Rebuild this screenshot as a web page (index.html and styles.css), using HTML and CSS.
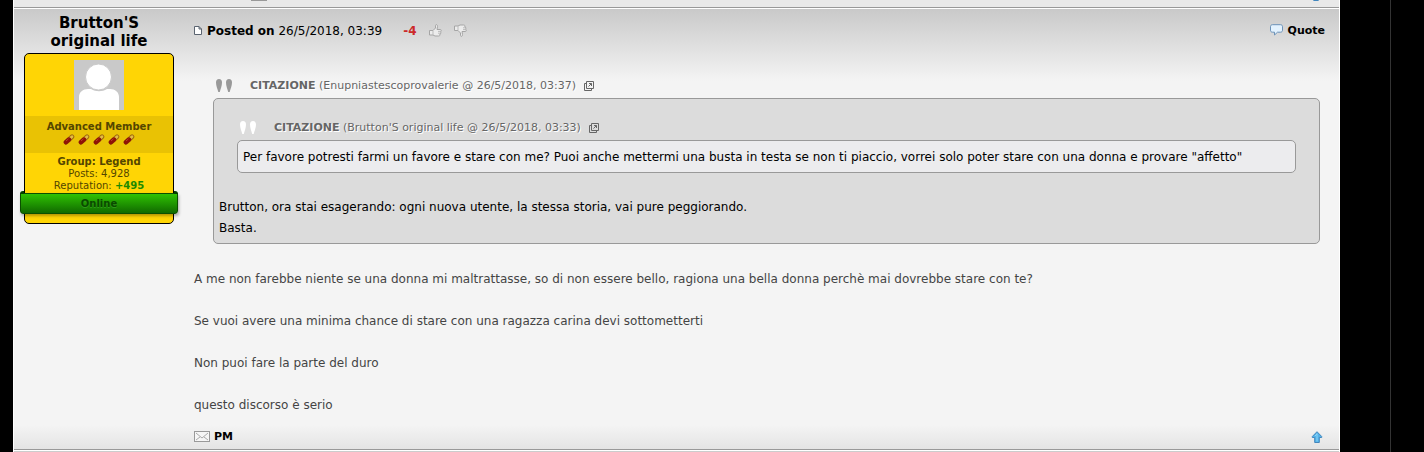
FILE: index.html
```html
<!DOCTYPE html>
<html lang="it">
<head>
    <meta charset="UTF-8">
    <meta name="viewport" content="width=device-width, initial-scale=1.0">
    <title>Forum</title>
    <link rel="stylesheet" href="styles.css">
</head>
<body>
    <svg class="defs" aria-hidden="true">
        <symbol id="mail" viewBox="0 0 16 11">
            <rect x=".5" y=".5" width="15" height="10" fill="#f6f6f6" stroke="#999"/>
            <path d="M2 2l6 5 6-5M2 9l4-3M14 9l-4-3" fill="none" stroke="#aaa"/>
        </symbol>
        <symbol id="arrow" viewBox="0 0 12 12">
            <path d="M6 .7L10.700 5.500V6.500H8.300V11.500H3.700V6.500H1.300V5.500Z" fill="#53b2e8" stroke="#4386bd"/>
            <path d="M6 2.500v8M4 5l2-2" stroke="#8dd4f7" fill="none"/>
        </symbol>
        <symbol id="quotes" viewBox="0 0 16 14">
            <path d="M3 0C5 0 6 1.300 6 3.500C6 7 4.500 10 3.800 13H2.300C1.600 10 0 7 0 3.500C0 1.300 1 0 3 0ZM13 0c2 0 3 1.300 3 3.500c0 3.500-1.600 6.500-2.300 9.500h-1.500c-.7-3-2.200-6-2.200-9.500C10 1.300 11 0 13 0Z" fill="currentColor"/>
        </symbol>
        <symbol id="open" viewBox="0 0 10 10">
            <path d="M2.500 .5h7v7h-7zM2 2.500H.5v7h7V8M4.500 5.500l3-3M5 2.500h2.500V5" fill="none" stroke="#666"/>
        </symbol>
        <symbol id="pill" viewBox="0 0 12 11">
            <path d="M3 8.200L9 2.700" stroke="#a06a10" stroke-width="4.600" stroke-linecap="round"/>
            <path d="M7.500 4L9 2.700" stroke="#e3bd45" stroke-width="2.600" stroke-linecap="round"/>
            <path d="M3 8.200L6 5.500" stroke="#8f1206" stroke-width="4.400" stroke-linecap="round"/>
            <path d="M3 7L5.500 4.800" stroke="#b8402e"/>
        </symbol>
        <symbol id="thumb" viewBox="0 0 13 13">
            <path d="M.5 6.500h3.500L6.500 4V1.500C6.500 0 8.800 .5 8.500 2.500L8 5.500h3.500c1 0 1 1.800 0 1.800c.8 0 .8 1.700-.3 1.700c.6.200.5 1.600-.5 1.600c.3.700 0 1.400-1 1.400H6L4 11H.5Z" fill="#ececec" stroke="#a5a5a5"/>
            <path d="M4 6.500V11M9 7.400h2M9 9.200h2" fill="none" stroke="#bbb"/>
        </symbol>
    </svg>

    <div class="page">
        <div class="post-end">
            <svg class="mail"><use href="#mail"/></svg>
            <svg class="arrow"><use href="#arrow"/></svg>
        </div>

        <div class="post">
            <div class="user">
                <h2 class="nick">Brutton'S original life</h2>
                <div class="card">
                    <svg class="avatar" viewBox="0 0 50 50">
                        <rect width="50" height="50" fill="#c9c9c9"/>
                        <path d="M5 50V37c0-5 4-8 9-8h3c5 3 11 3 16 0h3c5 0 9 3 9 8v13z" fill="#fff"/>
                        <circle cx="24.500" cy="17" r="13" fill="#fff" stroke="#c9c9c9"/>
                    </svg>
                    <div class="rank">
                        <strong>Advanced Member</strong>
                        <div class="pills">
                            <svg><use href="#pill"/></svg>
                            <svg><use href="#pill"/></svg>
                            <svg><use href="#pill"/></svg>
                            <svg><use href="#pill"/></svg>
                            <svg><use href="#pill"/></svg>
                        </div>
                    </div>
                    <div class="stats">
                        <strong>Group: Legend</strong><br>
                        Posts: 4,928<br>
                        Reputation: <b class="rep">+495</b>
                    </div>
                    <div class="online">Online</div>
                </div>
            </div>

            <div class="main">
                <div class="top">
                    <svg class="page-icon" viewBox="0 0 8 9"><path d="M.5 .5h4.500l2.500 2.500v5.500h-7zM5 .5v2.500h2.500" fill="#fff" stroke="#5b6470"/></svg>
                    <span><b>Posted on</b> 26/5/2018, 03:39</span>
                    <b class="points">-4</b>
                    <button class="vote" aria-label="Like"><svg><use href="#thumb"/></svg></button>
                    <button class="vote down" aria-label="Dislike"><svg><use href="#thumb"/></svg></button>
                    <a class="quote-link" href="#">
                        <svg viewBox="0 0 13 12"><path d="M2.500 .7h8c1.300 0 2 .8 2 2v3.500c0 1.200-.7 2-2 2H7.500L4.500 11V8.200h-2c-1.300 0-2-.8-2-2V2.700c0-1.200.7-2 2-2z" fill="#e3f2fe" stroke="#6c92b8"/></svg>
                        Quote
                    </a>
                </div>

                <div class="quote">
                    <div class="quote-title">
                        <svg class="quotes"><use href="#quotes"/></svg>
                        <span><b>CITAZIONE</b> (Enupniastescoprovalerie @ 26/5/2018, 03:37)</span>
                        <a href="#" aria-label="Open post"><svg class="open"><use href="#open"/></svg></a>
                    </div>
                    <div class="quote-body">
                        <div class="quote inner">
                            <div class="quote-title">
                                <svg class="quotes"><use href="#quotes"/></svg>
                                <span><b>CITAZIONE</b> (Brutton'S original life @ 26/5/2018, 03:33)</span>
                                <a href="#" aria-label="Open post"><svg class="open"><use href="#open"/></svg></a>
                            </div>
                            <div class="quote-body">Per favore potresti farmi un favore e stare con me? Puoi anche mettermi una busta in testa se non ti piaccio, vorrei solo poter stare con una donna e provare "affetto"</div>
                        </div>
                        <p>Brutton, ora stai esagerando: ogni nuova utente, la stessa storia, vai pure peggiorando.<br>Basta.</p>
                    </div>
                </div>

                <div class="text">
                    <p>A me non farebbe niente se una donna mi maltrattasse, so di non essere bello, ragiona una bella donna perchè mai dovrebbe stare con te?</p>
                    <p>Se vuoi avere una minima chance di stare con una ragazza carina devi sottometterti</p>
                    <p>Non puoi fare la parte del duro</p>
                    <p>questo discorso è serio</p>
                </div>
            </div>

            <div class="bottom">
                <a class="pm" href="#"><svg class="mail"><use href="#mail"/></svg>PM</a>
                <a class="to-top" href="#" aria-label="Top"><svg class="arrow"><use href="#arrow"/></svg></a>
            </div>
        </div>
        <div class="next"></div>
    </div>
    <div class="side"></div>
</body>
</html>
```

FILE: styles.css
```css
* {
    box-sizing: border-box;
}

body {
    margin: 0;
    padding-left: 13px;
    display: flex;
    background: #000;
    color: #000;
    font-family: Verdana, "DejaVu Sans", sans-serif;
    font-size: 12px;
    overflow: hidden;
}

svg {
    display: block;
    flex: none;
}

p {
    margin: 0;
}

a {
    color: #000;
    text-decoration: none;
}

.defs {
    position: absolute;
    width: 0;
    height: 0;
}

.page {
    flex: 1;
    border: solid #fff;
    border-width: 0 1px;
    background: #f4f4f4;
}

.side {
    width: 84px;
    border-right: 33px solid #000;
    background: linear-gradient(#333, #333) right / 1px 100% no-repeat;
}

.mail {
    width: 16px;
    height: 11px;
}

.arrow {
    width: 12px;
    height: 12px;
}

/* tail of the previous post */
.post-end {
    height: 8px;
    padding: 0 17px 6px 237px;
    display: flex;
    justify-content: space-between;
    align-items: flex-end;
    overflow: hidden;
    background: #e9e9e9;
    border-bottom: 1px solid #999;
}

.post {
    display: grid;
    grid-template-columns: 180px 1fr;
    border-top: 1px solid #fff;
    border-bottom: 1px solid #999;
    background: linear-gradient(#c9c9c9, #f4f4f4 72px);
}

.next {
    height: 2px;
    border-top: 1px solid #fff;
    background: #ccc;
}

/* user column */
.user {
    padding: 5px 20px 0 10px;
    text-align: center;
}

.nick {
    margin: 0 10px 3px;
    font-size: 15px;
    line-height: 18px;
}

.card {
    padding-top: 6px;
    padding-bottom: 9px;
    border: 1px solid #000;
    border-radius: 5px;
    background: #ffd505;
    color: #544600;
    font-size: 10px;
    line-height: 12px;
}

.avatar {
    width: 50px;
    height: 50px;
    margin: 0 auto 6px;
}

.rank {
    height: 37px;
    padding-top: 5px;
    background: #e9c204;
}

.pills {
    display: flex;
    justify-content: center;
    gap: 3px;
    margin-top: 1px;
}

.pills svg {
    width: 12px;
    height: 11px;
}

.stats {
    padding-top: 3px;
}

.rep {
    color: #1c8a00;
}

.online {
    position: relative;
    margin: 1px -5px 0;
    padding: 4px 0 3px;
    border: 1px solid #0b4f00;
    border-radius: 0 0 3px 3px;
    background: linear-gradient(#2fc203, #106a00);
    box-shadow: 1px 2px 3px rgba(0,0,0,0.3);
    color: #0a4a00;
    font-weight: bold;
    text-shadow: 0 1px 0 #2f9a1a;
}

/* folded ends of the ribbon */
.online::before,
.online::after {
    content: "";
    position: absolute;
    bottom: 100%;
    width: 4px;
    height: 3px;
    background: #063f00;
}

.online::before {
    left: -1px;
    border-top-left-radius: 3px;
}

.online::after {
    right: -1px;
    border-top-right-radius: 3px;
}

/* post */
.main {
    padding-right: 19px;
}

.top {
    height: 43px;
    padding-right: 14px;
    margin-right: -19px;
    display: flex;
    align-items: center;
}

.page-icon {
    width: 8px;
    height: 9px;
    margin-right: 5px;
}

.points {
    margin: 0 12px 0 21px;
    color: #cc2a2a;
}

.vote {
    width: 13px;
    height: 13px;
    margin-right: 12px;
    padding: 0;
    border: 0;
    background: none;
}

.vote svg {
    width: 13px;
    height: 13px;
}

.down svg {
    transform: scaleY(-1);
}

.quote-link {
    margin-left: auto;
    display: flex;
    gap: 5px;
    font-size: 11px;
    font-weight: bold;
}

.quote-link svg {
    width: 13px;
    height: 12px;
}

.quote {
    margin: 25px 0 0 19px;
}

.quote-title {
    height: 21px;
    padding-left: 3px;
    display: flex;
    align-items: flex-start;
    color: #666;
    font-size: 11px;
    line-height: 18px;
    text-shadow: 1px 1px 0 #fff;
}

.quotes {
    width: 16px;
    height: 14px;
    margin: 2px 18px 0 0;
    color: #999;
}

.open {
    width: 10px;
    height: 10px;
    margin: 4px 0 0 8px;
}

.quote-body {
    padding: 6px 5px 4px;
    border: 1px solid #999;
    border-radius: 5px;
    background: #dcdcdc;
    line-height: 21px;
}

.inner {
    margin: 14px 18px 24px;
}

.inner .quotes {
    color: #fff;
}

.inner .quote-body {
    background: #ececee;
}

.text {
    padding-top: 25px;
    color: #444;
    line-height: 21px;
}

.text p {
    margin-bottom: 21px;
}

.bottom {
    grid-column: 1 / -1;
    height: 24px;
    margin-top: -12px;
    padding: 0 16px 1px 180px;
    display: flex;
    justify-content: space-between;
    align-items: center;
    background: linear-gradient(#f4f4f4, #e4e4e4);
}

.pm {
    display: flex;
    align-items: center;
    gap: 4px;
    font-size: 11px;
    font-weight: bold;
}
```
